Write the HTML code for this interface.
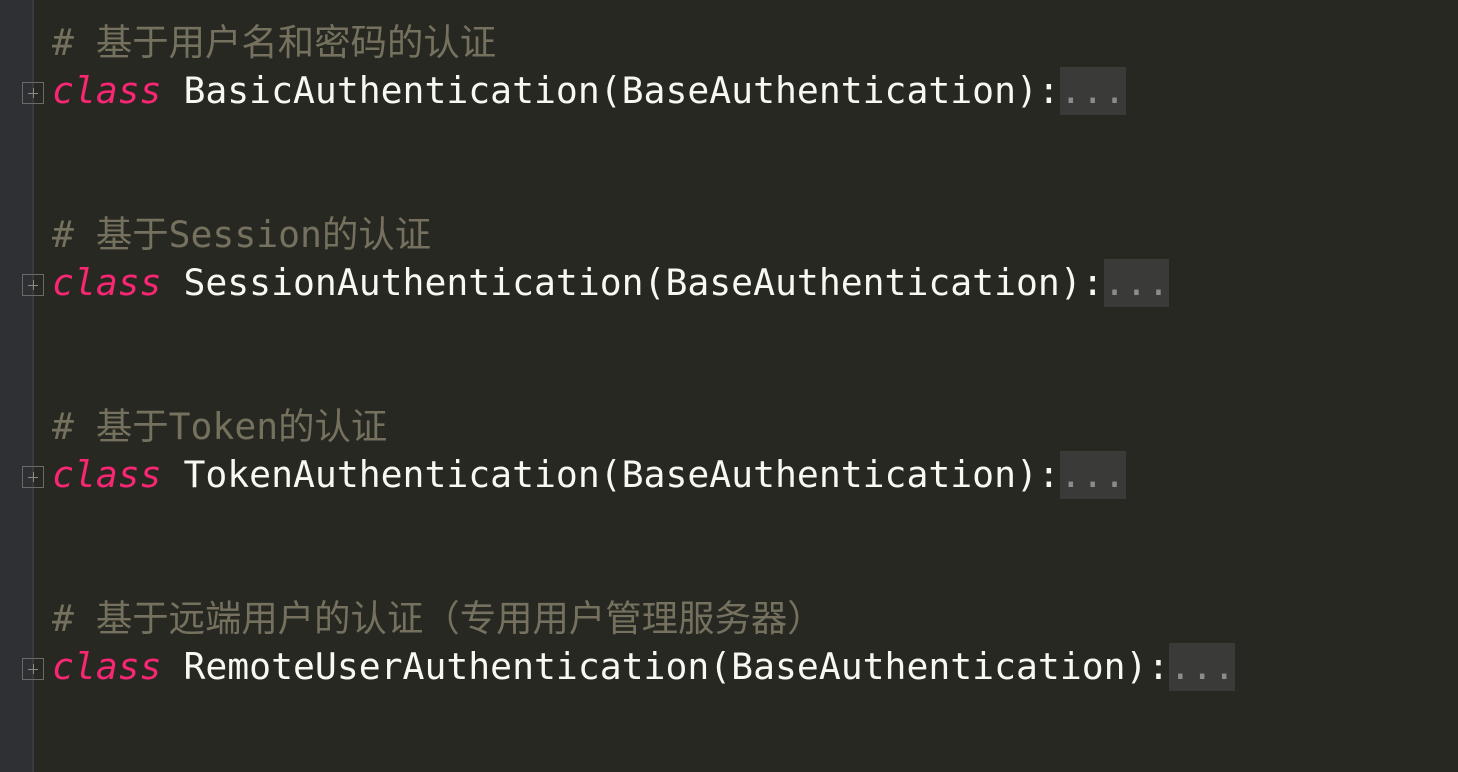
<!DOCTYPE html>
<html><head><meta charset="utf-8"><style>
html,body{margin:0;padding:0}
body{width:1458px;height:772px;background:#272822;position:relative;overflow:hidden;font-family:"DejaVu Sans Mono","Noto Sans CJK SC",monospace;font-size:36.4px}
.gut{position:absolute;left:0;top:0;width:32px;height:772px;background:#2f3034;border-right:2px solid #393a3d}
.l{position:absolute;left:52px;height:48px;line-height:48px;white-space:pre;color:#f8f8f2}
.c{color:#75715e}
.k{color:#f92672;font-style:italic}
.d{background:#3a3a39;color:#8c8c8a;display:inline-block;height:48px}
.f{position:absolute;left:22px;width:22px;height:22px;border:1px solid #6a6a68;box-sizing:border-box}
.f:before{content:"";position:absolute;left:5px;top:10px;width:10px;height:1px;background:#8a8a88}
.f:after{content:"";position:absolute;left:10px;top:5px;width:1px;height:10px;background:#8a8a88}
</style></head><body>
<div class="gut"></div>
<div class="l c" style="top:19px"># 基于用户名和密码的认证</div>
<div class="f" style="top:82px"></div>
<div class="l" style="top:67px"><span class="k">class</span> BasicAuthentication(BaseAuthentication):<span class="d">...</span></div>
<div class="l c" style="top:211px"># 基于Session的认证</div>
<div class="f" style="top:274px"></div>
<div class="l" style="top:259px"><span class="k">class</span> SessionAuthentication(BaseAuthentication):<span class="d">...</span></div>
<div class="l c" style="top:403px"># 基于Token的认证</div>
<div class="f" style="top:466px"></div>
<div class="l" style="top:451px"><span class="k">class</span> TokenAuthentication(BaseAuthentication):<span class="d">...</span></div>
<div class="l c" style="top:595px"># 基于远端用户的认证（专用用户管理服务器）</div>
<div class="f" style="top:658px"></div>
<div class="l" style="top:643px"><span class="k">class</span> RemoteUserAuthentication(BaseAuthentication):<span class="d">...</span></div>
</body></html>
